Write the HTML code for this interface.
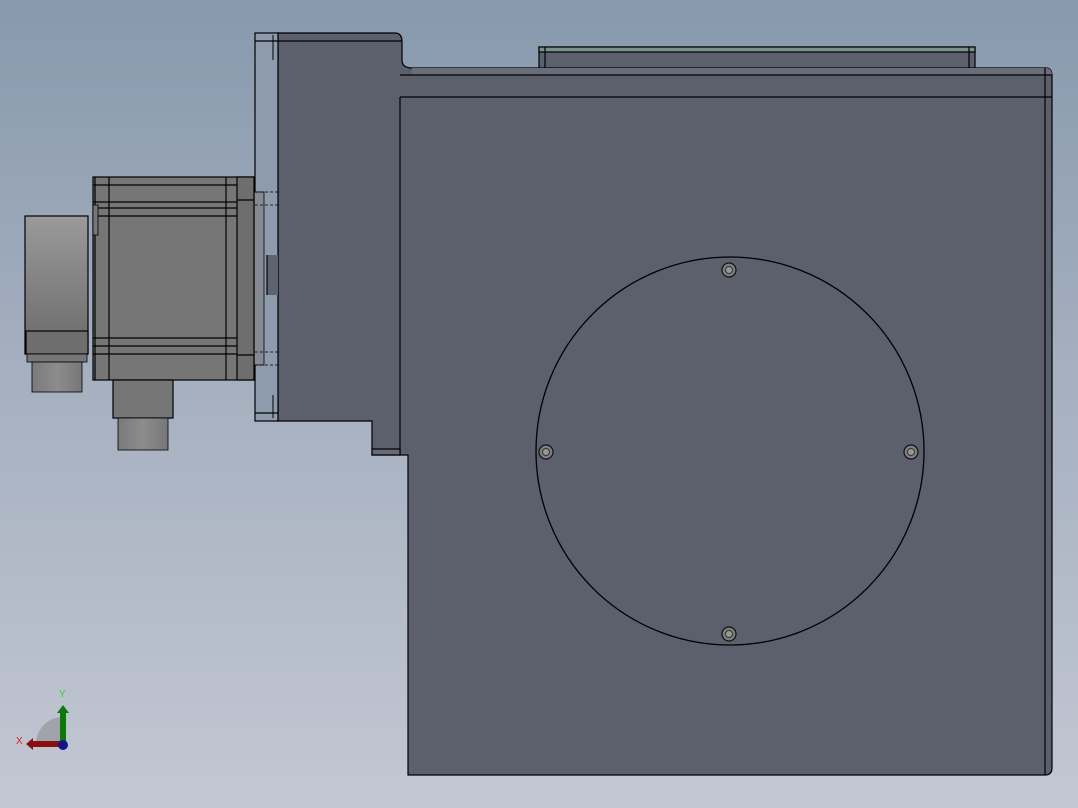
<!DOCTYPE html>
<html><head><meta charset="utf-8"><style>
html,body{margin:0;padding:0;width:1078px;height:808px;overflow:hidden}
body{background:linear-gradient(#8899ad 0%,#a4afbf 45%,#c3c7d3 100%)}
svg{position:absolute;left:0;top:0}
</style></head><body>
<svg width="1078" height="808" viewBox="0 0 1078 808" xmlns="http://www.w3.org/2000/svg">
<defs>
<linearGradient id="enc" x1="0" y1="0" x2="0" y2="1"><stop offset="0" stop-color="#9a9a9a"/><stop offset="1" stop-color="#6a6a6a"/></linearGradient>
<linearGradient id="con" x1="0" y1="0" x2="1" y2="0"><stop offset="0" stop-color="#7a7a7a"/><stop offset=".5" stop-color="#8c8c8c"/><stop offset="1" stop-color="#777"/></linearGradient>
</defs>
<g stroke="#000" stroke-width="1.2">
<!-- top plate -->
<rect x="539" y="47" width="436" height="22" fill="#5c606c"/>
<rect x="539" y="47" width="436" height="5" fill="#7a9189"/>
<line x1="545" y1="47" x2="545" y2="69"/><line x1="969" y1="47" x2="969" y2="69"/>
<!-- main body outline -->
<path d="M278 33 H395 Q402 33 402 42 V60 Q402 68 412 68 H1046 Q1052 68 1052 76 V768 Q1052 775 1045 775 H408 V455 H372 V421 H278 Z" fill="#5c606c"/>
<path d="M412 68 H1046 Q1052 68 1052 76 V75 H412 Z" fill="#6a6e7a" stroke="none"/>
<line x1="400" y1="75" x2="1052" y2="75"/>
<line x1="400" y1="97" x2="1052" y2="97"/>
<line x1="400" y1="97" x2="400" y2="455"/>
<line x1="1045" y1="68" x2="1045" y2="775"/>
<line x1="278" y1="41" x2="402" y2="41"/>
<rect x="372" y="449" width="28" height="6" fill="#666a76"/>
<!-- flange translucent -->
<rect x="255" y="33" width="23" height="388" fill="#8e9bad"/>
<line x1="255" y1="41" x2="278" y2="41"/><line x1="255" y1="413" x2="278" y2="413"/>
<line x1="273" y1="35" x2="273" y2="60" stroke-width="1"/><line x1="273" y1="395" x2="273" y2="418" stroke-width="1"/>
<!-- adapter / shaft -->
<rect x="254" y="192" width="10" height="173" fill="#858a93" stroke-width="0.8"/>
<rect x="267" y="255" width="11" height="40" fill="#5f6370" stroke="none"/>
<line x1="267" y1="255" x2="267" y2="295"/>
<g stroke-dasharray="3,2" stroke-width="0.8"><line x1="255" y1="192" x2="278" y2="192"/><line x1="255" y1="205" x2="278" y2="205"/><line x1="255" y1="352" x2="278" y2="352"/><line x1="255" y1="365" x2="278" y2="365"/></g>
<!-- motor -->
<rect x="93" y="177" width="161" height="203" fill="#767676"/>
<rect x="237" y="177" width="17" height="203" fill="#6e6e6e"/>
<line x1="109" y1="177" x2="109" y2="380"/><line x1="226" y1="177" x2="226" y2="380"/>
<line x1="95" y1="177" x2="95" y2="380"/>
<line x1="93" y1="185" x2="237" y2="185"/><line x1="93" y1="202" x2="237" y2="202"/><line x1="93" y1="208" x2="237" y2="208"/><line x1="93" y1="216" x2="237" y2="216"/>
<line x1="237" y1="200" x2="254" y2="200"/><line x1="237" y1="355" x2="254" y2="355"/>
<line x1="93" y1="338" x2="237" y2="338"/><line x1="93" y1="346" x2="237" y2="346"/><line x1="93" y1="354" x2="237" y2="354"/>
<rect x="93" y="205" width="5" height="30" fill="#777" stroke-width="0.8"/>
<!-- encoder -->
<rect x="25" y="216" width="63" height="138" fill="url(#enc)"/>
<rect x="26" y="331" width="62" height="23" fill="#6e6e6e"/>
<rect x="27" y="354" width="60" height="8" fill="#777" stroke-width="0.8"/>
<rect x="32" y="362" width="50" height="30" fill="url(#con)" stroke-width="0.8"/>
<rect x="113" y="380" width="60" height="38" fill="#767676"/>
<rect x="118" y="418" width="50" height="32" fill="url(#con)" stroke-width="0.8"/>
<!-- circle -->
<circle cx="730" cy="451" r="194" fill="#5c606c" stroke-width="1.3"/>
</g>
<g fill="#7e7e7e" stroke="#111" stroke-width="1.2">
<circle cx="729" cy="270" r="7"/><circle cx="546" cy="452" r="7"/><circle cx="911" cy="452" r="7"/><circle cx="729" cy="634" r="7"/>
</g>
<g fill="#999" stroke="#333" stroke-width="1">
<circle cx="729" cy="270" r="3.5"/><circle cx="546" cy="452" r="3.5"/><circle cx="911" cy="452" r="3.5"/><circle cx="729" cy="634" r="3.5"/>
</g>
<!-- triad -->
<path d="M36 744 A27 27 0 0 1 63 717 V744 Z" fill="#a0a3aa"/>
<rect x="60" y="712" width="6" height="32" fill="#0b7a0b"/>
<path d="M57 713 L63 705 L69 713 Z" fill="#0b7a0b"/>
<rect x="32" y="741" width="32" height="6" fill="#8a1010"/>
<path d="M33 738 L26 744 L33 750 Z" fill="#8a1010"/>
<circle cx="63" cy="745" r="5" fill="#13138a"/>
<text x="59" y="697" font-family="Liberation Sans, sans-serif" font-size="10" fill="#2fd42f">Y</text>
<text x="16" y="744" font-family="Liberation Sans, sans-serif" font-size="10" fill="#e02020">X</text>
</svg>
</body></html>
